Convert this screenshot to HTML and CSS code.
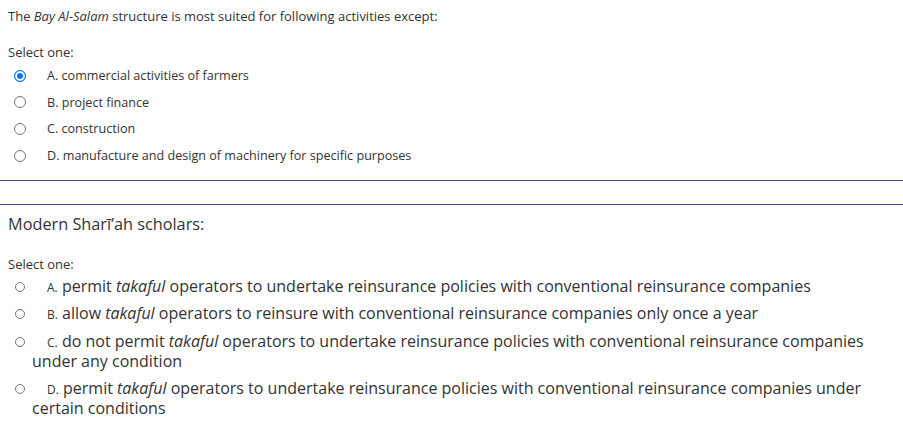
FILE: index.html
```html
<!DOCTYPE html>
<html>
<head>
<meta charset="utf-8">
<link rel="stylesheet" href="styles.css">
</head>
<body>
<div class="q q1">
  <p class="qtext">The <em>Bay Al-Salam</em> structure is most suited for following activities except:</p>
  <p class="prompt">Select one:</p>
  <div class="answers">
    <div class="opt"><span class="radio checked"></span><span class="lbl">A. commercial activities of farmers</span></div>
    <div class="opt"><span class="radio"></span><span class="lbl">B. project finance</span></div>
    <div class="opt"><span class="radio"></span><span class="lbl">C. construction</span></div>
    <div class="opt"><span class="radio"></span><span class="lbl">D. manufacture and design of machinery for specific purposes</span></div>
  </div>
</div>
<div class="rule"></div>
<div class="rule rule2"></div>
<div class="q q2">
  <p class="qtext">Modern Sharīʼah scholars:</p>
  <p class="prompt">Select one:</p>
  <div class="answers">
    <div class="opt"><span class="radio"></span><span class="num">A.</span> permit <em>takaful</em> operators to undertake reinsurance policies with conventional reinsurance companies</div>
    <div class="opt"><span class="radio"></span><span class="num">B.</span> allow <em>takaful</em> operators to reinsure with conventional reinsurance companies only once a year</div>
    <div class="opt"><span class="radio"></span><span class="num">C.</span> do not permit <em>takaful</em> operators to undertake reinsurance policies with conventional reinsurance companies under any condition</div>
    <div class="opt"><span class="radio"></span><span class="num">D.</span> permit <em>takaful</em> operators to undertake reinsurance policies with conventional reinsurance companies under certain conditions</div>
  </div>
</div>
</body>
</html>
```
FILE: styles.css
```css
html, body {
  margin: 0;
  padding: 0;
  background: #ffffff;
}
body {
  font-family: "Open Sans", "DejaVu Sans", sans-serif;
  color: #333333;
}
.q {
  padding: 0 8px;
}
.q1 {
  padding-top: 7px;
}
.qtext, .prompt {
  margin: 0;
}
.q1 .qtext {
  font-size: 13px;
  line-height: 18px;
}
.prompt {
  font-size: 13px;
  line-height: 18px;
}
.q1 .prompt {
  margin-top: 18px;
}
.q1 .answers {
  margin-top: 6px;
}
.q1 .opt {
  font-size: 12.6px;
  line-height: 18px;
  height: 18px;
  margin-bottom: 8.67px;
  padding-left: 24px;
}
.radio {
  display: inline-block;
  box-sizing: border-box;
  border-radius: 50%;
  border: 1px solid #767676;
  background: #ffffff;
  vertical-align: middle;
  line-height: 0;
}
.q1 .radio {
  width: 12px;
  height: 12px;
  margin-left: -18px;
  margin-right: 21px;
  position: relative;
  top: -1px;
}
.radio.checked {
  border-color: #0075ff;
  background: #0075ff;
  box-shadow: inset 0 0 0 2px #ffffff;
  border-width: 1.5px;
}
.rule {
  height: 1px;
  background: #2a4b8b;
  margin-top: 15px;
}
.rule2 {
  margin-top: 23px;
}
.q2 .qtext {
  font-size: 16.3px;
  line-height: 24px;
  margin-top: 7px;
}
.q2 .prompt {
  margin-top: 19px;
}
.q2 .answers {
  margin-top: 3px;
}
.q2 .opt {
  font-size: 16px;
  line-height: 20px;
  margin-bottom: 7.5px;
  padding-left: 24px;
}
.q2 .radio {
  width: 10px;
  height: 10px;
  margin-left: -17px;
  margin-right: 22px;
  position: relative;
  top: -1px;
}
.num {
  font-size: 12px;
  line-height: 1;
}
```
